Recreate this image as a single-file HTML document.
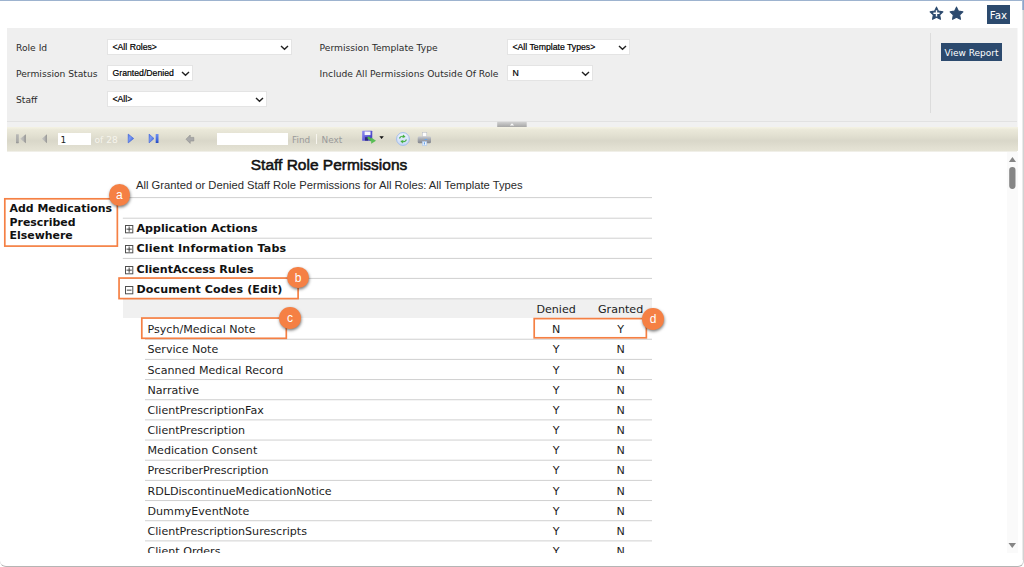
<!DOCTYPE html>
<html lang="en">
<head>
<meta charset="utf-8">
<title>Staff Role Permissions</title>
<style>
*{box-sizing:border-box;margin:0;padding:0}
html,body{width:1024px;height:567px;overflow:hidden;background:#fff}
body{position:relative;font-family:"DejaVu Sans","Liberation Sans",sans-serif;color:#222}
.abs{position:absolute}
#frame{position:absolute;left:0;top:0;width:1024px;height:567px;border-top:1px solid #9db3cf;border-bottom:1px solid #b5b5b5;border-right:1px solid #d2d2d2;border-radius:0 0 6px 6px}
#frame:before{content:"";position:absolute;right:0;top:0;width:1px;height:559px;background:#eaeaea}
#frame:after{content:"";position:absolute;right:-1px;top:-1px;width:2px;height:10px;background:linear-gradient(90deg,#b7c6db,#7d9ac4)}
#panel{position:absolute;left:7px;top:28px;width:1010px;height:99px;background:#efefef;box-shadow:1px 0 0 #f7f7f7}
#panel .sep{position:absolute;left:0;top:93px;width:1010px;height:1px;background:#e2e2e2}
#panel .foot{position:absolute;left:0;top:94px;width:1010px;height:5px;background:#f1f1f1}
.lbl{position:absolute;font-size:9.16px;line-height:12px;color:#2b2b2b;white-space:nowrap}
.sel{position:absolute;background:#fff;border:1px solid #e4e4e4;height:16px;font-family:"Liberation Sans",sans-serif;font-size:8.700px;line-height:14px;padding-left:4.500px;color:#000;white-space:nowrap;-webkit-text-stroke:.2px #000}
.sel svg{position:absolute;right:2px;top:4.5px}
#vsep{position:absolute;left:930px;top:33px;width:1px;height:80px;background:#dcdcdc}
.btn{position:absolute;background:#2c4a6e;color:#fff;text-align:center;white-space:nowrap}
#toolbar{position:absolute;left:7px;top:127px;width:1011px;height:24px;border-bottom:0 solid #f1f0ea;background:linear-gradient(#f5f3e4,#eae8d9 12%,#e2e0d1 35%,#d9d7c9 58%,#e0ded0 80%,#e6e4d6)}
.tbt{position:absolute;font-size:9.5px;line-height:12px;white-space:nowrap}
#report{position:absolute;left:0;top:0;width:1008px;height:553px;overflow:hidden}
#title{position:absolute;left:129px;top:155px;width:400px;text-align:center;font-family:"Liberation Sans",sans-serif;font-weight:normal;font-size:15.5px;line-height:20px;color:#111;white-space:nowrap;-webkit-text-stroke:.55px #111}
#sub{position:absolute;left:136px;top:178px;font-family:"Liberation Sans",sans-serif;font-size:11.23px;line-height:14px;color:#2a2a2a;white-space:nowrap}
.grp{position:absolute;left:136.5px;font-weight:bold;font-size:11.1px;line-height:16px;color:#111;white-space:nowrap}
.exp{position:absolute;left:124.900px;width:9px;height:9px}
.row{position:absolute;left:147.5px;font-size:11.1px;line-height:16px;color:#1c1c1c;white-space:nowrap}
.cv{position:absolute;width:60px;text-align:center;font-size:11.1px;line-height:16px;color:#1c1c1c}
.badge{position:absolute;width:21.600px;height:21.600px;border-radius:50%;background:#f58044;color:#fff;font-family:"Liberation Sans",sans-serif;font-size:12px;line-height:22px;text-align:center;box-shadow:.5px 1.500px 3px rgba(0,0,0,.5)}
#note{position:absolute;left:9.5px;top:202.2px;font-weight:bold;font-size:10.95px;line-height:13.5px;color:#111;white-space:nowrap}
</style>
</head>
<body>
<div id="frame"></div>

<!-- header icons -->
<svg class="abs" style="left:929px;top:5.500px" width="15" height="15" viewBox="0 0 16 16"><path d="M8 1.200l2.100 4.300 4.700.7-3.400 3.300.8 4.700L8 12l-4.200 2.200.8-4.700L1.200 6.200l4.700-.7z" fill="#2c4a6e" stroke="#2c4a6e" stroke-width="1.200" stroke-linejoin="round"/><path d="M8 4.500v6.600M4.700 7.800h6.600" stroke="#fff" stroke-width="1.500"/></svg>
<svg class="abs" style="left:949px;top:5.500px" width="15" height="15" viewBox="0 0 16 16"><path d="M8 1.200l2.100 4.300 4.700.7-3.400 3.300.8 4.700L8 12l-4.200 2.200.8-4.700L1.200 6.200l4.700-.7z" fill="#2c4a6e" stroke="#2c4a6e" stroke-width="1.200" stroke-linejoin="round"/></svg>
<div class="btn" style="left:987px;top:5px;width:23px;height:19px;font-size:10.300px;line-height:21px">Fax</div>

<!-- filter panel -->
<div id="panel"><div class="sep"></div><div class="foot"></div></div>
<div class="lbl" style="left:16px;top:41.6px">Role Id</div>
<div class="lbl" style="left:16px;top:68px">Permission Status</div>
<div class="lbl" style="left:16px;top:94px">Staff</div>
<div class="lbl" style="left:319.600px;top:41.6px">Permission Template Type</div>
<div class="lbl" style="left:319.600px;top:68px">Include All Permissions Outside Of Role</div>

<div class="sel" style="left:107px;top:39px;width:185px">&lt;All Roles&gt;<svg width="9" height="6" viewBox="0 0 9 6"><path d="M1 1l3.500 3.300L8 1" fill="none" stroke="#222" stroke-width="1.400"/></svg></div>
<div class="sel" style="left:107px;top:65px;width:86px">Granted/Denied<svg width="9" height="6" viewBox="0 0 9 6"><path d="M1 1l3.500 3.300L8 1" fill="none" stroke="#222" stroke-width="1.400"/></svg></div>
<div class="sel" style="left:107px;top:91px;width:160px">&lt;All&gt;<svg width="9" height="6" viewBox="0 0 9 6"><path d="M1 1l3.500 3.300L8 1" fill="none" stroke="#222" stroke-width="1.400"/></svg></div>
<div class="sel" style="left:507px;top:39px;width:123px">&lt;All Template Types&gt;<svg width="9" height="6" viewBox="0 0 9 6"><path d="M1 1l3.500 3.300L8 1" fill="none" stroke="#222" stroke-width="1.400"/></svg></div>
<div class="sel" style="left:507px;top:65px;width:86px">N<svg width="9" height="6" viewBox="0 0 9 6"><path d="M1 1l3.500 3.300L8 1" fill="none" stroke="#222" stroke-width="1.400"/></svg></div>

<div id="vsep"></div>
<div class="btn" style="left:941px;top:43px;width:61px;height:18px;font-size:9px;line-height:21.500px">View Report</div>

<!-- splitter handle -->
<svg class="abs" style="left:497px;top:121px" width="30" height="6" viewBox="0 0 30 6"><defs><linearGradient id="hg" x1="0" y1="0" x2="0" y2="1"><stop offset="0" stop-color="#d2d2d2"/><stop offset="1" stop-color="#a6a6a6"/></linearGradient></defs><rect x=".2" y=".8" width="29.500" height="5.200" fill="url(#hg)"/><path d="M12.800 4.600h4.400L15 2.200z" fill="#fafafa"/></svg>

<!-- toolbar -->
<div id="toolbar"></div><div class="abs" style="left:7px;top:151px;width:1010px;height:1px;background:#f0efe8"></div>

<!-- toolbar items -->
<svg class="abs" style="left:15px;top:133px" width="12" height="11" viewBox="0 0 12 11"><defs><linearGradient id="gg1" x1="0" y1="0" x2="1" y2="0"><stop offset="0" stop-color="#c6c6c4"/><stop offset=".6" stop-color="#b4b4b2"/><stop offset="1" stop-color="#8c8c8c"/></linearGradient><linearGradient id="gg2" x1="0" y1="0" x2="0" y2="1"><stop offset="0" stop-color="#b9b9b7"/><stop offset=".8" stop-color="#a9a9a7"/><stop offset="1" stop-color="#8f8f8f"/></linearGradient></defs><rect x="1" y="1.200" width="2.800" height="9" rx=".4" fill="url(#gg2)"/><path d="M10.800 1.200v9L5.200 5.700z" fill="url(#gg1)"/></svg>
<svg class="abs" style="left:40px;top:133px" width="9" height="11" viewBox="0 0 9 11"><path d="M6.900 1.200v9L1.900 5.700z" fill="url(#gg1)"/></svg>
<div class="abs" style="left:58px;top:133px;width:33px;height:12px;background:#fff;font-size:9px;line-height:14px;padding-left:2.500px;color:#222">1</div>
<div class="tbt" style="left:94.500px;top:134px;color:#f6f4ec;font-size:9.100px">of 28</div>
<svg class="abs" style="left:127px;top:133px" width="9" height="11" viewBox="0 0 9 11"><defs><linearGradient id="bg1" x1="0" y1="0" x2="1" y2="1"><stop offset="0" stop-color="#4a70e2"/><stop offset=".35" stop-color="#7d9cf5"/><stop offset="1" stop-color="#3057d2"/></linearGradient><linearGradient id="bg2" x1="0" y1="0" x2="0" y2="1"><stop offset="0" stop-color="#6d8ff0"/><stop offset=".7" stop-color="#3d64da"/><stop offset="1" stop-color="#2347bd"/></linearGradient></defs><path d="M1.200 1.100v8.800L6.700 5.500z" fill="url(#bg1)" stroke="#3f65da" stroke-width=".6" stroke-linejoin="round"/></svg>
<svg class="abs" style="left:148px;top:133px" width="12" height="11" viewBox="0 0 12 11"><path d="M1.100 1.100v8.800L6 5.500z" fill="url(#bg1)" stroke="#3f65da" stroke-width=".6" stroke-linejoin="round"/><rect x="7.700" y="1" width="2.800" height="9.100" rx=".4" fill="url(#bg2)"/></svg>
<svg class="abs" style="left:185px;top:134px" width="10" height="10" viewBox="0 0 10 10"><path d="M1 5.200L5.200 1v2.400h3.600v3.600H5.200v2.400z" fill="#a9a9a9" stroke="#8f8f8f" stroke-width=".6"/></svg>
<div class="abs" style="left:217px;top:133px;width:71px;height:12px;background:#fff"></div>
<div class="tbt" style="left:292px;top:134px;color:#9a9a9a;font-size:8.900px">Find</div>
<div class="abs" style="left:316px;top:134px;width:1px;height:10px;background:#f7f5ee"></div>
<div class="tbt" style="left:321.500px;top:134px;color:#9a9a9a;font-size:8.900px">Next</div>
<svg class="abs" style="left:361px;top:129px" width="17" height="17" viewBox="0 0 17 17"><defs><linearGradient id="fg" x1="0" y1="0" x2="1" y2=".6"><stop offset="0" stop-color="#9a98f2"/><stop offset=".5" stop-color="#6460dc"/><stop offset="1" stop-color="#4a42c2"/></linearGradient></defs><rect x="1.100" y="1.700" width="10.150" height="10" rx=".5" fill="url(#fg)"/><rect x="3.600" y="2.500" width="5.900" height="3.600" fill="#f6f6fc"/><rect x="4" y="8.200" width="3" height="3.400" fill="#2e2b78"/><path d="M6.900 8.100l3.800 3.600" stroke="#4cb648" stroke-width="2.200" fill="none"/><path d="M10.200 8.500l4.800 3.200-4.800 3z" fill="#58be54"/></svg>
<svg class="abs" style="left:379px;top:136px" width="6" height="4" viewBox="0 0 6 4"><path d="M.4.200h4.400L2.600 2.900z" fill="#111"/></svg>
<svg class="abs" style="left:395px;top:131px" width="16" height="16" viewBox="0 0 16 16"><defs><linearGradient id="rg" x1="0" y1="0" x2="0" y2="1"><stop offset="0" stop-color="#eef3fd"/><stop offset="1" stop-color="#c6d8f6"/></linearGradient></defs><circle cx="7.950" cy="8" r="6.400" fill="url(#rg)" stroke="#a3beec" stroke-width="1"/><path d="M4 7.400c.4-2 2.300-3 4-2.600l.3-1.300 2.300 2.600-3.200 1 .3-1.200c-1.100-.2-2.100.4-2.500 1.600z" fill="#44b040"/><path d="M11.900 8.600c-.4 2-2.300 3-4 2.600l-.3 1.300-2.300-2.600 3.200-1-.3 1.200c1.100.2 2.100-.4 2.500-1.600z" fill="#44b040"/></svg>
<svg class="abs" style="left:416px;top:131px" width="16" height="16" viewBox="0 0 16 16"><defs><linearGradient id="pg" x1="0" y1="0" x2="0" y2="1"><stop offset="0" stop-color="#cfd1d6"/><stop offset=".45" stop-color="#a4a7ae"/><stop offset="1" stop-color="#83868e"/></linearGradient></defs><rect x="6.300" y="1.300" width="4.500" height="4.600" fill="#fdfdfd" stroke="#b4b8c2" stroke-width=".5"/><rect x="1.700" y="5.200" width="13.300" height="7" rx="1.500" fill="url(#pg)"/><rect x="8.600" y="8" width="2.600" height="1" fill="#6aa6ec"/><rect x="6.300" y="10.400" width="4.500" height="4.200" fill="#eaf3fe" stroke="#9fbce4" stroke-width=".5"/><rect x="7.800" y="11.300" width="1.200" height="2.200" fill="#6aa6ec"/></svg>
<!-- report -->
<div id="report">
<div id="title">Staff Role Permissions</div>
<div id="sub">All Granted or Denied Staff Role Permissions for All Roles: All Template Types</div>
<svg class="exp" style="top:224.6px" viewBox="0 0 9 9"><rect x=".5" y=".5" width="7.300" height="7.300" fill="#fff" stroke="#505050" stroke-width="1"/><path d="M1.500 4.150h5.300M4.150 1.500v5.300" stroke="#333" stroke-width=".9"/></svg><div class="grp" style="top:220.75px">Application Actions</div>
<svg class="exp" style="top:244.6px" viewBox="0 0 9 9"><rect x=".5" y=".5" width="7.300" height="7.300" fill="#fff" stroke="#505050" stroke-width="1"/><path d="M1.500 4.150h5.300M4.150 1.500v5.300" stroke="#333" stroke-width=".9"/></svg><div class="grp" style="top:240.75px;letter-spacing:.17px">Client Information Tabs</div>
<svg class="exp" style="top:265.6px" viewBox="0 0 9 9"><rect x=".5" y=".5" width="7.300" height="7.300" fill="#fff" stroke="#505050" stroke-width="1"/><path d="M1.500 4.150h5.300M4.150 1.500v5.300" stroke="#333" stroke-width=".9"/></svg><div class="grp" style="top:261.75px">ClientAccess Rules</div>
<svg class="exp" style="top:285.6px" viewBox="0 0 9 9"><rect x=".5" y=".5" width="7.300" height="7.300" fill="#fff" stroke="#505050" stroke-width="1"/><path d="M1.800 4.150h4.700" stroke="#333" stroke-width=".9"/></svg><div class="grp" style="top:281.75px;letter-spacing:.1px">Document Codes (Edit)</div>
<div class="abs" style="left:123px;top:299px;width:529px;height:19px;background:#f0f0f0"></div>
<div class="cv" style="left:526.100px;top:301.75px">Denied</div><div class="cv" style="left:590.600px;top:301.75px">Granted</div>
<div class="row" style="top:321.75px">Psych/Medical Note</div><div class="cv" style="left:526.100px;top:321.75px">N</div><div class="cv" style="left:590.600px;top:321.75px">Y</div>
<div class="row" style="top:341.75px">Service Note</div><div class="cv" style="left:526.100px;top:341.75px">Y</div><div class="cv" style="left:590.600px;top:341.75px">N</div>
<div class="row" style="top:362.75px">Scanned Medical Record</div><div class="cv" style="left:526.100px;top:362.75px">Y</div><div class="cv" style="left:590.600px;top:362.75px">N</div>
<div class="row" style="top:382.75px">Narrative</div><div class="cv" style="left:526.100px;top:382.75px">Y</div><div class="cv" style="left:590.600px;top:382.75px">N</div>
<div class="row" style="top:402.75px">ClientPrescriptionFax</div><div class="cv" style="left:526.100px;top:402.75px">Y</div><div class="cv" style="left:590.600px;top:402.75px">N</div>
<div class="row" style="top:422.75px">ClientPrescription</div><div class="cv" style="left:526.100px;top:422.75px">Y</div><div class="cv" style="left:590.600px;top:422.75px">N</div>
<div class="row" style="top:442.75px">Medication Consent</div><div class="cv" style="left:526.100px;top:442.75px">Y</div><div class="cv" style="left:590.600px;top:442.75px">N</div>
<div class="row" style="top:462.75px">PrescriberPrescription</div><div class="cv" style="left:526.100px;top:462.75px">Y</div><div class="cv" style="left:590.600px;top:462.75px">N</div>
<div class="row" style="top:483.75px">RDLDiscontinueMedicationNotice</div><div class="cv" style="left:526.100px;top:483.75px">Y</div><div class="cv" style="left:590.600px;top:483.75px">N</div>
<div class="row" style="top:503.75px">DummyEventNote</div><div class="cv" style="left:526.100px;top:503.75px">Y</div><div class="cv" style="left:590.600px;top:503.75px">N</div>
<div class="row" style="top:523.75px">ClientPrescriptionSurescripts</div><div class="cv" style="left:526.100px;top:523.75px">Y</div><div class="cv" style="left:590.600px;top:523.75px">N</div>
<div class="row" style="top:543.75px">Client Orders</div><div class="cv" style="left:526.100px;top:543.75px">Y</div><div class="cv" style="left:590.600px;top:543.75px">N</div>
<svg class="abs" style="left:0;top:0" width="1008" height="553" viewBox="0 0 1008 553"><g fill="#d0d0d0"><rect x="122.800" y="197.1" width="529.200" height="1"/><rect x="122.800" y="217.7" width="529.200" height="1"/><rect x="122.800" y="237.7" width="529.200" height="1"/><rect x="122.800" y="257.9" width="529.200" height="1"/><rect x="122.800" y="277.9" width="529.200" height="1"/><rect x="122.800" y="298.3" width="529.200" height="1"/><rect x="145" y="338.73" width="507" height="1"/><rect x="145" y="358.9" width="507" height="1"/><rect x="145" y="379.06" width="507" height="1"/><rect x="145" y="399.23" width="507" height="1"/><rect x="145" y="419.39" width="507" height="1"/><rect x="145" y="439.56" width="507" height="1"/><rect x="145" y="459.72" width="507" height="1"/><rect x="145" y="479.89" width="507" height="1"/><rect x="145" y="500.05" width="507" height="1"/><rect x="145" y="520.22" width="507" height="1"/><rect x="145" y="540.38" width="507" height="1"/></g></svg>
</div>
<!-- annotations -->
<svg class="abs" style="left:0;top:0" width="1024" height="567" viewBox="0 0 1024 567"><g fill="none" stroke="#f58044" stroke-width="1.700">
<rect x="4.800" y="198.800" width="112.550" height="47.300" fill="#fff"/>
<rect x="119.050" y="278.050" width="179.050" height="20.550"/>
<rect x="141.800" y="318.050" width="144.500" height="20.250"/>
<rect x="534.200" y="318.600" width="112.150" height="19.200"/>
</g></svg>
<div id="note">Add Medications<br>Prescribed<br>Elsewhere</div>
<div class="badge" style="left:108.500px;top:184px">a</div>
<div class="badge" style="left:287.200px;top:266.900px">b</div>
<div class="badge" style="left:279.200px;top:307.300px">c</div>
<div class="badge" style="left:642.300px;top:308.300px">d</div>
<!-- scrollbar -->
<div class="abs" style="left:1007px;top:152px;width:11px;height:401px;background:#fafafa"></div>
<svg class="abs" style="left:1007px;top:152px" width="11" height="401" viewBox="0 0 11 401"><path d="M1.900 10h7.100L5.450 4.900z" fill="#858585"/><rect x="2.200" y="15" width="6.300" height="21.900" rx="3.100" fill="#858585"/><path d="M1.500 390.900h7.500L5.250 395.900z" fill="#858585"/></svg>
</body>
</html>
